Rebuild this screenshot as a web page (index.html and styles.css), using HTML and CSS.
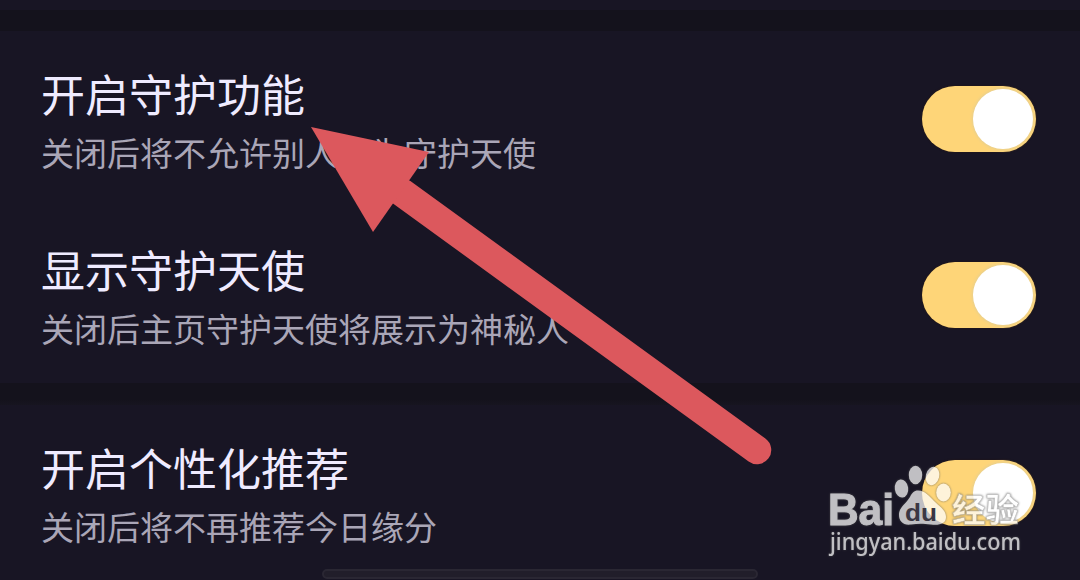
FILE: index.html
```html
<!DOCTYPE html>
<html lang="zh-CN">
<head>
<meta charset="utf-8">
<title>守护设置</title>
<link rel="stylesheet" href="styles.css">
</head>
<body>
<main class="screen">
  <div class="divider divider-top"></div>
  <section class="group">
    <div class="row">
      <div class="label"><h2 class="title">开启守护功能</h2><p class="desc">关闭后将不允许别人成为守护天使</p></div>
      <div class="switch"><div class="knob"></div></div>
    </div>
    <div class="row">
      <div class="label"><h2 class="title">显示守护天使</h2><p class="desc">关闭后主页守护天使将展示为神秘人</p></div>
      <div class="switch"><div class="knob"></div></div>
    </div>
  </section>
  <div class="divider divider-mid"></div>
  <section class="group">
    <div class="row">
      <div class="label"><h2 class="title">开启个性化推荐</h2><p class="desc">关闭后将不再推荐今日缘分</p></div>
      <div class="switch"><div class="knob"></div></div>
    </div>
  </section>
  <div class="home-bar"></div>
  <svg class="arrow" viewBox="0 0 1080 580">
    <path d="M402 192.500L757 450" stroke="#dc585d" stroke-width="28.500" stroke-linecap="round"/>
    <path d="M311 127L429 152L373 232Z" fill="#dc585d"/>
  </svg>
  <svg class="watermark" viewBox="820 440 240 130">
    <g class="mark">
      <text class="brand" x="828" y="524.500" textLength="66" lengthAdjust="spacingAndGlyphs">Bai</text>
      <ellipse cx="901.500" cy="488.500" rx="6.700" ry="9" transform="rotate(-8 901.500 488.500)"/>
      <ellipse cx="915.500" cy="475" rx="6.700" ry="9.300"/>
      <ellipse cx="932.500" cy="476" rx="6.700" ry="9.300" transform="rotate(14 932.500 476)"/>
      <ellipse cx="943.500" cy="492.500" rx="7.300" ry="9"/>
      <path d="M918 490.500C925 490.500 929 496 934 501C940 507 946 510 946 517C946 524 939 525.500 931 524.500C923 523.500 918 523.500 911 524.500C903 525.500 899 521 899 515C899 507 906 504 910 497C912 493 914 490.500 918 490.500Z"/>
      <text class="cn" x="952" y="522" textLength="67" lengthAdjust="spacingAndGlyphs">经验</text>
      <text class="url" x="830" y="550" textLength="191" lengthAdjust="spacingAndGlyphs">jingyan.baidu.com</text>
    </g>
    <text class="du" x="905" y="521" textLength="32" lengthAdjust="spacingAndGlyphs">du</text>
  </svg>
</main>
</body>
</html>
```

FILE: styles.css
```css
body { margin: 0; background: #181524; }
.screen {
  position: relative;
  width: 1080px;
  height: 580px;
  overflow: hidden;
  background: #181524;
  font-family: "Noto Sans CJK SC", sans-serif;
}
.divider { background: #14121c; }
.divider-top { height: 21px; margin-top: 0; border-top: 10px solid #181524; }
.divider-mid { height: 22px; background: linear-gradient(#14121c 75%, #171520); }
.row {
  display: flex;
  justify-content: space-between;
  height: 176px;
  padding: 0 44px 0 41px;
  box-sizing: border-box;
}
.label { padding-top: 39px; }
.title, .desc { margin: 0; font-weight: 400; white-space: nowrap; }
.title { font-size: 44px; line-height: 46px; color: #efebff; }
.desc { margin-top: 19px; font-size: 33px; line-height: 34px; color: #aaa6b7; }
.switch {
  display: flex;
  justify-content: flex-end;
  align-items: center;
  width: 114px;
  height: 66px;
  margin-top: 55px;
  padding-right: 3px;
  box-sizing: border-box;
  border-radius: 33px;
  background: #fed578;
  box-shadow: 0 0 2px #2c1a10;
}
.knob {
  width: 60px;
  height: 60px;
  border-radius: 50%;
  background: #fff;
  box-shadow: 0 0 3px 1px #e6cf91;
}
.home-bar {
  position: absolute;
  left: 322px;
  top: 569px;
  width: 436px;
  height: 10px;
  box-sizing: border-box;
  border: 2px solid #2a2733;
  border-radius: 5px;
  background: #211e2a;
}
.arrow { position: absolute; left: 0; top: 0; width: 1080px; height: 580px; }
.watermark { position: absolute; left: 820px; top: 440px; width: 240px; height: 130px; }
.mark { fill: #fff; opacity: .73; filter: drop-shadow(0 0 .8px #555); }
.brand { font: 700 44px "Liberation Sans", sans-serif; stroke: #fff; stroke-width: 1px; }
.cn { font: 700 33px "Noto Sans CJK SC", sans-serif; stroke: #aaa; stroke-width: .6px; }
.url { font: 500 23.5px "Noto Sans", sans-serif; }
.du { font: 700 23px "Liberation Sans", sans-serif; fill: #3b3743; }
```
